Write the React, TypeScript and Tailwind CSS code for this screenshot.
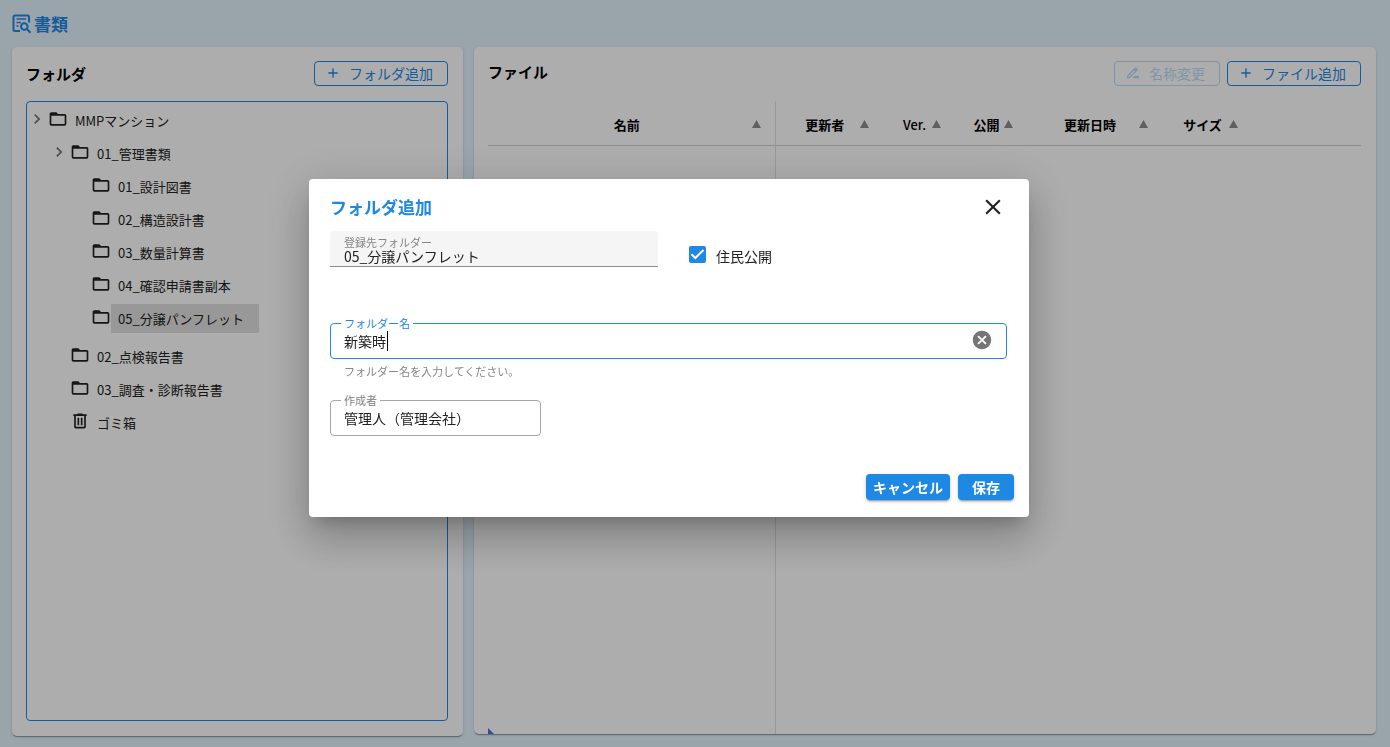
import React, { useState } from 'react';
import { MdDriveFileRenameOutline } from 'react-icons/md';

type IconProps = { d: string; className?: string };

const Icon: React.FC<IconProps> = ({ d, className }) => (
  <svg viewBox="0 0 24 24" fill="currentColor" aria-hidden="true" className={className}>
    <path d={d} />
  </svg>
);

const icons = {
  folder:
    'M20,18H4V8H20M20,6H12L10,4H4C2.89,4 2,4.89 2,6V18A2,2 0 0,0 4,20H20A2,2 0 0,0 22,18V8C22,6.89 21.1,6 20,6Z',
  chevron: 'M8.59,16.58L13.17,12L8.59,7.41L10,6L16,12L10,18L8.59,16.58Z',
  trash:
    'M7 21q-.825 0-1.412-.587T5 19V6H4V4h5V3h6v1h5v2h-1v13q0 .825-.587 1.413T17 21zM17 6H7v13h10V6zM9 17h2V8H9zm4 0h2V8h-2z',
  plus: 'M19,13H13V19H11V13H5V11H11V5H13V11H19V13Z',
  close:
    'M19,6.41L17.59,5L12,10.59L6.41,5L5,6.41L10.59,12L5,17.59L6.41,19L12,13.41L17.59,19L19,17.59L13.41,12L19,6.41Z',
  clear:
    'M12,2C17.53,2 22,6.47 22,12C22,17.53 17.53,22 12,22C6.47,22 2,17.53 2,12C2,6.47 6.47,2 12,2M15.59,7L12,10.59L8.41,7L7,8.41L10.59,12L7,15.59L8.41,17L12,13.41L15.59,17L17,15.59L13.41,12L17,8.41L15.59,7Z',
};

const tree = [
  { label: 'MMPマンション', level: 0, open: true },
  { label: '01_管理書類', level: 1, open: true },
  { label: '01_設計図書', level: 2 },
  { label: '02_構造設計書', level: 2 },
  { label: '03_数量計算書', level: 2 },
  { label: '04_確認申請書副本', level: 2 },
  { label: '05_分譲パンフレット', level: 2, selected: true },
  { label: '02_点検報告書', level: 1 },
  { label: '03_調査・診断報告書', level: 1 },
  { label: 'ゴミ箱', level: 1, icon: icons.trash },
];

const indent = ['pl-0', 'pl-[22px]', 'pl-[43px]'];

const columns = [
  { label: '名前', width: 'w-[287px]', weight: 'font-bold' },
  { label: '更新者', width: 'w-[108px]', weight: 'font-bold' },
  { label: 'Ver.', width: 'w-[72px]', weight: 'font-medium' },
  { label: '公開', width: 'w-[72px]', weight: 'font-bold' },
  { label: '更新日時', width: 'w-[135px]', weight: 'font-bold' },
  { label: 'サイズ', width: 'w-[90px]', weight: 'font-bold' },
];

const card =
  'flex flex-col rounded-[5px] bg-white px-[14px] pt-[14px] shadow-[0_2px_1px_-1px_rgba(0,0,0,0.2),0_1px_1px_rgba(0,0,0,0.14),0_1px_3px_rgba(0,0,0,0.12)]';
const outlined =
  'flex h-[25px] items-center gap-2 rounded-[4px] border border-[#1e88e5] pr-[14px] pb-px pl-[10px] text-sm text-[#1e88e5] disabled:opacity-30';
const filled =
  'h-[26px] rounded-[4px] bg-[#1e88e5] pb-px text-sm font-bold text-white shadow-[0_3px_1px_-2px_rgba(0,0,0,0.2),0_2px_2px_rgba(0,0,0,0.14),0_1px_5px_rgba(0,0,0,0.12)]';

const DocumentSearchIcon = () => (
  <svg viewBox="0 0 20 20" fill="none" stroke="currentColor" strokeWidth="2" className="h-5 w-5" aria-hidden="true">
    <path d="M8 17H3A1.500 1.500 0 0 1 1.500 15.500V3A1.500 1.500 0 0 1 3 1.500H15.500A1.500 1.500 0 0 1 17 3V8.500" />
    <path d="M4.500 5H14.200M4.500 8.500H9M4.500 12H6.500" strokeWidth="1.700" />
    <circle cx="12.300" cy="12.500" r="3.300" />
    <path d="M14.600 14.800L18.500 18.700" />
  </svg>
);

const FolderPanel = () => (
  <section className={`${card} pb-[15px]`}>
    <div className="flex items-center justify-between pr-px">
      <h2 className="text-[15px] leading-[25px] font-bold text-black">フォルダ</h2>
      <button type="button" className={outlined}>
        <Icon d={icons.plus} className="h-4 w-4" />
        フォルダ追加
      </button>
    </div>
    <ul className="mt-[15px] mr-px flex-1 rounded-[4px] border border-[#1e88e5] pt-[2px]">
      {tree.map((node) => (
        <li
          key={node.label}
          className={`flex h-[33px] items-center ${node.selected ? 'mb-[5px]' : ''} ${indent[node.level]}`}
        >
          <span className="mr-px w-5">
            {node.open && <Icon d={icons.chevron} className="mb-[3px] h-5 w-5 text-[#757575]" />}
          </span>
          <Icon d={node.icon ?? icons.folder} className="mb-[3px] h-5 w-5" />
          <span
            className={`flex h-[29px] items-center pt-px pr-[15px] pl-[7px] text-[13px] ${node.selected ? 'bg-[#e0e0e0]' : ''}`}
          >
            {node.label}
          </span>
        </li>
      ))}
    </ul>
  </section>
);

const FilePanel = () => (
  <section className={`${card} relative mb-[2px]`}>
    <div className="flex items-start justify-between pr-px">
      <h2 className="text-[15px] leading-[22px] font-bold text-black">ファイル</h2>
      <div className="flex gap-[7px]">
        <button type="button" disabled className={outlined}>
          <MdDriveFileRenameOutline className="h-4 w-4" />
          名称変更
        </button>
        <button type="button" className={outlined}>
          <Icon d={icons.plus} className="h-4 w-4" />
          ファイル追加
        </button>
      </div>
    </div>
    <div className="mt-[15px] mr-px grid flex-1">
      <table className="w-full table-fixed border-collapse text-[13px]">
        <thead>
          <tr className="border-b border-[#cfcfcf]">
            {columns.map((column) => (
              <th
                key={column.label}
                className={`h-[44px] p-0 text-black first:border-r first:border-[#e0e0e0] ${column.width} ${column.weight}`}
              >
                <span className="flex items-center pt-[3px] pr-[14px] pl-[14px]">
                  <span className="flex-1 text-center whitespace-nowrap">{column.label}</span>
                  <svg viewBox="0 0 9 8" className="h-2 w-[9px] fill-[#8c8c8c]" aria-hidden="true">
                    <path d="M4.500 0L9 8H0Z" />
                  </svg>
                </span>
              </th>
            ))}
            <th className="p-0" />
          </tr>
        </thead>
        <tbody>
          <tr className="h-full">
            <td className="border-r border-[#e0e0e0]" />
            <td colSpan={6} />
          </tr>
        </tbody>
      </table>
    </div>
    <svg viewBox="0 0 6 6" className="absolute bottom-0 left-[14px] h-[6px] w-[6px] fill-[#3f7ae0]" aria-hidden="true">
      <path d="M0 0L6 6H0Z" />
    </svg>
  </section>
);

const AddFolderDialog = () => {
  const [name, setName] = useState('新築時');
  const [open, setOpen] = useState(true);
  const [isPublic, setIsPublic] = useState(true);

  if (!open) return null;

  return (
    <div className="fixed inset-0 flex items-center justify-center bg-black/32 pr-[52px] pb-[51px]">
      <div
        role="dialog"
        aria-modal="true"
        aria-labelledby="dialog-title"
        className="w-full max-w-[720px] rounded-[4px] bg-white pt-[13px] pr-[15px] pb-[17px] pl-[21px] shadow-[0_11px_15px_-7px_rgba(0,0,0,0.2),0_24px_38px_3px_rgba(0,0,0,0.14),0_9px_46px_8px_rgba(0,0,0,0.12)]"
      >
        <div className="flex h-[30px] items-center justify-between pr-2">
          <h2 id="dialog-title" className="text-[17px] font-bold text-[#1e88e5]">
            フォルダ追加
          </h2>
          <button type="button" aria-label="閉じる" onClick={() => setOpen(false)}>
            <Icon d={icons.close} className="h-[26px] w-[26px]" />
          </button>
        </div>

        <div className="mt-[9px] flex items-center gap-[31px]">
          <div className="relative w-[328px]">
            <label htmlFor="parent" className="absolute top-[3px] left-[14px] text-[11px] leading-4 text-[#858585]">
              登録先フォルダー
            </label>
            <input
              id="parent"
              readOnly
              value="05_分譲パンフレット"
              className="h-9 w-full rounded-t-[4px] border-b border-[#8c8c8c] bg-[#f5f5f5] px-[14px] pt-4 text-sm outline-none"
            />
          </div>
          <div className="flex items-center gap-[10px] pt-[14px]">
            <span className="relative mb-1 flex">
              <input
                id="public"
                type="checkbox"
                checked={isPublic}
                onChange={(e) => setIsPublic(e.target.checked)}
                className="peer h-[17px] w-[17px] appearance-none rounded-[2px] border-2 border-[#757575] checked:border-[#1e88e5] checked:bg-[#1e88e5]"
              />
              <svg
                viewBox="0 0 17 17"
                className="pointer-events-none absolute inset-0 hidden fill-none stroke-white stroke-2 peer-checked:block"
                aria-hidden="true"
              >
                <path d="M2.500 8.200L6.300 12L14.500 4" />
              </svg>
            </span>
            <label htmlFor="public" className="text-sm leading-4">
              住民公開
            </label>
          </div>
        </div>

        <div className="relative mt-14 mr-[7px]">
          <label
            htmlFor="folder-name"
            className="absolute -top-2 left-[11px] bg-white px-[3px] text-[11px] leading-4 text-[#1e88e5]"
          >
            フォルダー名
          </label>
          <input
            id="folder-name"
            value={name}
            onChange={(e) => setName(e.target.value)}
            aria-describedby="folder-name-hint"
            className="h-9 w-full rounded-[4px] border border-[#1e88e5] pr-10 pl-[13px] text-sm outline-none"
          />
          <span className="pointer-events-none absolute top-2 left-[57px] h-5 w-px bg-black" />
          <button type="button" aria-label="クリア" onClick={() => setName('')} className="absolute top-[6px] right-[14px]">
            <Icon d={icons.clear} className="h-[22px] w-[22px] text-[#757575]" />
          </button>
        </div>
        <p id="folder-name-hint" className="mt-1 pl-[14px] text-[11px] leading-4 text-[#858585]">
          フォルダー名を入力してください。
        </p>

        <div className="relative mt-[21px] w-[211px]">
          <label
            htmlFor="author"
            className="absolute -top-2 left-[11px] bg-white px-[3px] text-[11px] leading-4 text-[#858585]"
          >
            作成者
          </label>
          <input
            id="author"
            defaultValue="管理人（管理会社）"
            className="h-9 w-full rounded-[4px] border border-[#a6a6a6] px-[13px] text-sm outline-none"
          />
        </div>

        <div className="mt-[38px] flex justify-end gap-2">
          <button type="button" className={`${filled} px-[7px]`} onClick={() => setOpen(false)}>
            キャンセル
          </button>
          <button type="button" className={`${filled} px-[14px]`}>
            保存
          </button>
        </div>
      </div>
    </div>
  );
};

const App: React.FC = () => {
  return (
    <div className="flex min-h-screen flex-col bg-[#e3f2fd] pr-[14px] pb-[11px] pl-3 font-['Noto_Sans_CJK_JP',sans-serif] text-[#212121]">
      <h1 className="flex h-[47px] items-center gap-[2px] text-[17px] font-bold text-[#1e88e5]">
        <DocumentSearchIcon />
        書類
      </h1>
      <main className="grid flex-1 grid-cols-[1fr_2fr] gap-[11px]">
        <FolderPanel />
        <FilePanel />
      </main>
      <AddFolderDialog />
    </div>
  );
};

export default App;
